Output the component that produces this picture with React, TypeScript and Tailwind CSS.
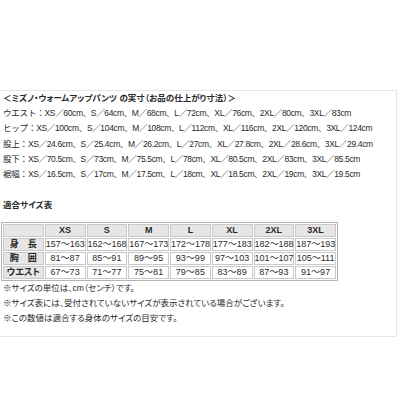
import React from "react";

const lines: [string, string][] = [
  ["ウエスト：", "XS／60cm、S／64cm、M／68cm、L／72cm、XL／76cm、2XL／80cm、3XL／83cm"],
  ["ヒップ：", "XS／100cm、S／104cm、M／108cm、L／112cm、XL／116cm、2XL／120cm、3XL／124cm"],
  ["股上：", "XS／24.6cm、S／25.4cm、M／26.2cm、L／27cm、XL／27.8cm、2XL／28.6cm、3XL／29.4cm"],
  ["股下：", "XS／70.5cm、S／73cm、M／75.5cm、L／78cm、XL／80.5cm、2XL／83cm、3XL／85.5cm"],
  ["裾幅：", "XS／16.5cm、S／17cm、M／17.5cm、L／18cm、XL／18.5cm、2XL／19cm、3XL／19.5cm"],
];

const sizes = ["XS", "S", "M", "L", "XL", "2XL", "3XL"];
const rows: [string, string[]][] = [
  ["身　長", ["157～163", "162～168", "167～173", "172～178", "177～183", "182～188", "187～193"]],
  ["胸　囲", ["81～87", "85～91", "89～95", "93～99", "97～103", "101～107", "105～111"]],
  ["ウエスト", ["67～73", "71～77", "75～81", "79～85", "83～89", "87～93", "91～97"]],
];

const notes = [
  "※サイズの単位は、cm（センチ）です。",
  "※サイズ表には、受付されていないサイズが表示されている場合がございます。",
  "※この数値は適合する身体のサイズの目安です。",
];

export default function App() {
  return (
    <div
      className="w-[400px] h-[400px] bg-white overflow-hidden text-[#2a2a2a] [font-feature-settings:'palt']"
      style={{ fontFamily: '"Liberation Sans", "Noto Sans CJK JP", sans-serif' }}
    >
      <div className="mt-[90px] ml-[-1px] w-[398px] h-[247px] border border-[#e6e6e6] pl-[3px]">
        <div className="text-[8.5px] leading-[15.2px] font-bold whitespace-nowrap">
          ＜ミズノ・ウォームアップパンツ の実寸（お品の仕上がり寸法）＞
        </div>
        {lines.map(([label, value]) => (
          <div key={label} className="text-[8.5px] leading-[15.2px] whitespace-nowrap [font-feature-settings:normal]">
            <span className="tracking-[-0.2px]">{label}</span>
            <span className="tracking-[-0.35px]">{value}</span>
          </div>
        ))}
        <div className="h-[16px]" />
        <div className="text-[8.5px] leading-[15px] font-bold">適合サイズ表</div>
        <table className="mt-[9px] ml-[-2px] w-[337px] table-fixed border-separate border-spacing-[1px] border border-[#b4b4b4] text-[9px]">
          <tbody>
            <tr>
              <td className="p-0 h-[11.5px] bg-[#e6e6e6] border border-[#c8c8c8]"></td>
              {sizes.map((s) => (
                <td key={s} className="p-0 h-[11.5px] bg-[#e6e6e6] border border-[#c8c8c8] text-center font-bold leading-[11px]">
                  {s}
                </td>
              ))}
            </tr>
            {rows.map(([h, vals]) => (
              <tr key={h}>
                <td className="p-0 h-[11.5px] bg-[#e6e6e6] border border-[#c8c8c8] text-center font-bold leading-[11px] whitespace-nowrap">
                  {h}
                </td>
                {vals.map((v) => (
                  <td key={v} className="p-0 h-[11.5px] bg-white border border-[#c8c8c8] text-center leading-[11px] whitespace-nowrap">
                    {v}
                  </td>
                ))}
              </tr>
            ))}
          </tbody>
        </table>
        {notes.map((n) => (
          <div key={n} className="text-[8.5px] leading-[15px] whitespace-nowrap">
            {n}
          </div>
        ))}
      </div>
    </div>
  );
}
